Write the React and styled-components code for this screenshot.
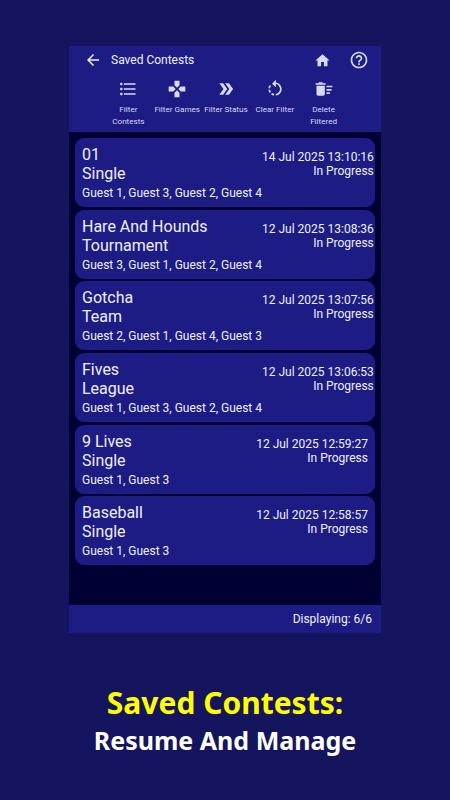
import styled, { createGlobalStyle } from 'styled-components';
import {
  MdArrowBack,
  MdDeleteSweep,
  MdDoubleArrow,
  MdFormatListBulleted,
  MdGamepad,
  MdHelpOutline,
  MdHome,
  MdRotateLeft,
} from 'react-icons/md';

const filters = [
  { label: 'Filter Contests', icon: MdFormatListBulleted },
  { label: 'Filter Games', icon: MdGamepad },
  { label: 'Filter Status', icon: MdDoubleArrow },
  { label: 'Clear Filter', icon: MdRotateLeft },
  { label: 'Delete Filtered', icon: MdDeleteSweep },
];

const contests = [
  { game: '01', type: 'Single', players: 'Guest 1, Guest 3, Guest 2, Guest 4', date: '14 Jul 2025 13:10:16' },
  { game: 'Hare And Hounds', type: 'Tournament', players: 'Guest 3, Guest 1, Guest 2, Guest 4', date: '12 Jul 2025 13:08:36' },
  { game: 'Gotcha', type: 'Team', players: 'Guest 2, Guest 1, Guest 4, Guest 3', date: '12 Jul 2025 13:07:56' },
  { game: 'Fives', type: 'League', players: 'Guest 1, Guest 3, Guest 2, Guest 4', date: '12 Jul 2025 13:06:53' },
  { game: '9 Lives', type: 'Single', players: 'Guest 1, Guest 3', date: '12 Jul 2025 12:59:27' },
  { game: 'Baseball', type: 'Single', players: 'Guest 1, Guest 3', date: '12 Jul 2025 12:58:57' },
];

export default function App() {
  return (
    <Page>
      <GlobalStyle />
      <Screen>
        <Header>
          <TitleBar>
            <MdArrowBack size={18} />
            <ScreenTitle>Saved Contests</ScreenTitle>
            <HeaderActions>
              <MdHome size={17} />
              <MdHelpOutline size={20} />
            </HeaderActions>
          </TitleBar>
          <FilterBar>
            {filters.map(({ label, icon: Icon }) => (
              <FilterButton key={label}>
                <Icon size={20} />
                <FilterLabel>{label}</FilterLabel>
              </FilterButton>
            ))}
          </FilterBar>
        </Header>

        <ContestList>
          {contests.map((contest) => (
            <ContestCard key={contest.date}>
              <ContestInfo>
                <ContestName>{contest.game}</ContestName>
                <ContestName>{contest.type}</ContestName>
                <Players>{contest.players}</Players>
              </ContestInfo>
              <ContestStatus>
                <div>{contest.date}</div>
                <div>In Progress</div>
              </ContestStatus>
            </ContestCard>
          ))}
        </ContestList>

        <Footer>Displaying: 6/6</Footer>
      </Screen>

      <Caption>
        <Headline>Saved Contests:</Headline>
        <Subline>Resume And Manage</Subline>
      </Caption>
    </Page>
  );
}

const GlobalStyle = createGlobalStyle`
  * {
    box-sizing: border-box;
  }

  body {
    margin: 0;
    background-color: #14145f;
  }
`;

const Page = styled.div`
  width: 450px;
  height: 800px;
  padding-top: 45.5px;
  display: flex;
  flex-direction: column;
  align-items: center;
  overflow: hidden;
  background-color: #14145f;
`;

const Screen = styled.div`
  width: 312px;
  height: 587px;
  display: flex;
  flex-direction: column;
  flex-shrink: 0;
  background-color: #000033;
  color: #f0f0fa;
  font-family: Roboto, sans-serif;
`;

const Header = styled.div`
  height: 86px;
  background-color: #1c1c84;
`;

const TitleBar = styled.div`
  height: 29px;
  padding: 0 12.5px 0 15px;
  display: flex;
  align-items: center;
`;

const ScreenTitle = styled.div`
  margin-left: 9px;
  font-size: 12px;
`;

const HeaderActions = styled.div`
  margin-left: auto;
  display: flex;
  align-items: center;
  gap: 17.5px;
  color: #d9d9f2;
`;

const FilterBar = styled.div`
  padding: 4px 0 0 35px;
  display: flex;
`;

const FilterButton = styled.div`
  width: 48.8px;
  display: flex;
  flex-direction: column;
  align-items: center;
  color: #d9d9f2;
`;

const FilterLabel = styled.div`
  margin-top: 4px;
  font-size: 8.1px;
  line-height: 12px;
  text-align: center;
`;

const ContestList = styled.div`
  flex: 1;
  padding: 6.5px 6px 0;
  display: flex;
  flex-direction: column;
  gap: 2.7px;
`;

const ContestCard = styled.div`
  height: 69px;
  padding: 7px 7px 0;
  display: flex;
  justify-content: space-between;
  border-radius: 9px;
  background-color: #1c1c84;
`;

const ContestInfo = styled.div`
  white-space: nowrap;
`;

const ContestName = styled.div`
  font-size: 16px;
  line-height: 19px;
`;

const Players = styled.div`
  margin-top: 3px;
  font-size: 12px;
  line-height: 14px;
`;

const ContestStatus = styled.div`
  padding-top: 5px;
  font-size: 12px;
  line-height: 14px;
  text-align: right;
  white-space: nowrap;
`;

const Footer = styled.div`
  height: 27.5px;
  padding-right: 9px;
  display: flex;
  align-items: center;
  justify-content: flex-end;
  background-color: #1c1c84;
  font-size: 12px;
`;

const Caption = styled.div`
  margin-top: 50px;
  text-align: center;
  font-family: 'Noto Sans', sans-serif;
  white-space: nowrap;
`;

const Headline = styled.div`
  color: #ffff00;
  font-size: 30px;
  font-weight: 700;
  line-height: 40px;
`;

const Subline = styled.div`
  color: #ffffff;
  font-size: 25px;
  font-weight: 700;
  line-height: 34px;
`;
